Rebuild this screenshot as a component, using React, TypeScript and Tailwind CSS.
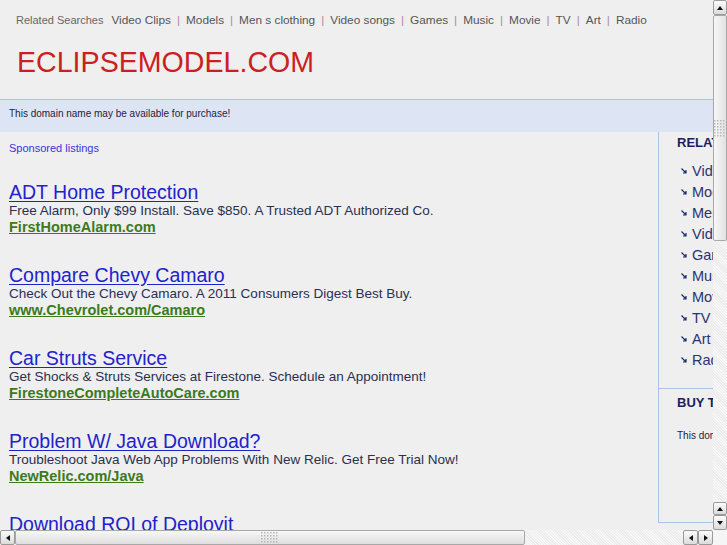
import React from "react";

const navLinks = ["Video Clips", "Models", "Men s clothing", "Video songs", "Games", "Music", "Movie", "TV", "Art", "Radio"];

const listings = [
    {
        title: "ADT Home Protection",
        text: "Free Alarm, Only $99 Install. Save $850. A Trusted ADT Authorized Co.",
        url: "FirstHomeAlarm.com",
    },
    {
        title: "Compare Chevy Camaro",
        text: "Check Out the Chevy Camaro. A 2011 Consumers Digest Best Buy.",
        url: "www.Chevrolet.com/Camaro",
    },
    {
        title: "Car Struts Service",
        text: "Get Shocks & Struts Services at Firestone. Schedule an Appointment!",
        url: "FirestoneCompleteAutoCare.com",
    },
    {
        title: "Problem W/ Java Download?",
        text: "Troubleshoot Java Web App Problems With New Relic. Get Free Trial Now!",
        url: "NewRelic.com/Java",
    },
    {
        title: "Download ROI of Deployit",
        text: "See How Deployit Cuts Deployment Costs. Download the Whitepaper Now!",
        url: "www.XebiaLabs.com",
    },
];

const Arrow = ({ dir }: { dir: "up" | "down" | "left" | "right" }) => {
    const pts = {
        up: "1,6 4,2 7,6",
        down: "1,2 4,6 7,2",
        left: "6,1 2,4 6,7",
        right: "2,1 6,4 2,7",
    }[dir];
    return (
        <svg width="8" height="8" viewBox="0 0 8 8">
            <polygon points={pts} fill="#111" />
        </svg>
    );
};

const Grip = ({ vertical }: { vertical?: boolean }) => {
    const cols = vertical ? 4 : 6;
    const rows = vertical ? 6 : 4;
    const dots = [];
    for (let r = 0; r < rows; r++) {
        for (let c = 0; c < cols; c++) {
            dots.push(<rect key={`${r}-${c}`} x={c * 3} y={r * 3} width="1.5" height="1.5" fill="#b8b8b8" />);
        }
    }
    return (
        <svg width={cols * 3} height={rows * 3}>
            {dots}
        </svg>
    );
};

const ScrollButton = ({ dir, className = "" }: { dir: "up" | "down" | "left" | "right"; className?: string }) => (
    <div
        className={`flex items-center justify-center rounded-[2px] border border-[#9a9a9a] bg-gradient-to-b from-[#fbfbfb] to-[#dcdcdc] ${className}`}
    >
        <Arrow dir={dir} />
    </div>
);

const BulletArrow = () => (
    <svg width="6" height="6" viewBox="0 0 6 6" className="mr-[5px] mt-[-2px] shrink-0">
        <path d="M0.5 0.5 L5 5 M5 2 L5 5 L2 5" stroke="#1e2a6a" strokeWidth="1.2" fill="none" />
    </svg>
);

const App = () => {
    return (
        <div className="flex h-[545px] w-[727px] flex-col overflow-hidden bg-[#efefef] font-['Liberation_Sans',Arial,sans-serif]">
            <div className="flex h-[530px]">
                <div className="w-[713px] shrink-0 overflow-hidden">
                    <div className="h-[99px] px-[16px] pt-[12px]">
                        <div className="flex items-center whitespace-nowrap leading-[16px]">
                            <span className="mr-[8px] text-[11px] text-[#666]">Related Searches</span>
                            {navLinks.map((link, i) => (
                                <span key={link} className="flex items-center text-[11.8px] text-[#555]">
                                    {i > 0 && <span className="px-[6px] text-[#b48aa0]">|</span>}
                                    {link}
                                </span>
                            ))}
                        </div>
                        <div className="mt-[18px] pl-[1px] text-[28.6px] leading-[32px] text-[#cc1f1f]">ECLIPSEMODEL.COM</div>
                    </div>

                    <div className="h-[33px] border-t border-[#aec2e6] bg-[#dde5f4] px-[9px] pt-[8px] text-[10px] leading-[12px] text-[#1f2240]">
                        This domain name may be available for purchase!
                    </div>

                    <div className="flex w-[900px]">
                        <div className="w-[658px] shrink-0 px-[9px] pt-[9px]">
                            <div className="text-[11px] leading-[14px] text-[#3535dd]">Sponsored listings</div>
                            <div className="mt-[27px]">
                                {listings.map((item) => (
                                    <div key={item.title} className="mb-[30px] whitespace-nowrap">
                                        <div className="text-[19.5px] leading-[21px] text-[#2222cc] underline underline-offset-2">
                                            {item.title}
                                        </div>
                                        <div className="text-[13.5px] leading-[16px] text-[#2a2f50]">{item.text}</div>
                                        <div className="text-[14.5px] font-bold leading-[16px] text-[#3d7a1c] underline underline-offset-1">
                                            {item.url}
                                        </div>
                                    </div>
                                ))}
                            </div>
                        </div>

                        <div className="h-[391px] w-[220px] shrink-0 border-b border-l border-[#aec2e6]">
                            <div className="h-[257px] border-b border-[#aec2e6] pl-[18px] pt-[3px]">
                                <div className="text-[13px] font-bold leading-[16px] text-[#1a1f5c]">RELATED SEARCHES</div>
                                <div className="mt-[10px] pl-[4px]">
                                    {navLinks.map((link) => (
                                        <div key={link} className="flex h-[21px] items-center text-[14.5px] text-[#2b3470]">
                                            <BulletArrow />
                                            {link}
                                        </div>
                                    ))}
                                </div>
                            </div>
                            <div className="pl-[18px] pt-[6px]">
                                <div className="text-[13px] font-bold leading-[16px] text-[#1a1f5c]">BUY THIS DOMAIN</div>
                                <div className="mt-[19px] text-[10px] leading-[12px] text-[#1f2240]">
                                    This domain may be for sale.
                                </div>
                            </div>
                        </div>
                    </div>
                </div>

                <div className="flex w-[14px] flex-col bg-[#f5f5f5]">
                    <ScrollButton dir="up" className="h-[15px]" />
                    <div className="flex h-[226px] items-start justify-center rounded-[2px] border border-[#a8a8a8] bg-gradient-to-r from-[#f7f7f7] to-[#e2e2e2] pt-[104px]">
                        <Grip vertical />
                    </div>
                    <div className="flex-1 bg-[repeating-linear-gradient(45deg,#f7f7f7_0px,#f7f7f7_1px,#ececec_1px,#ececec_2px)]" />
                    <ScrollButton dir="up" className="h-[13px]" />
                    <ScrollButton dir="down" className="h-[15px]" />
                </div>
            </div>

            <div className="flex h-[15px] bg-[#f5f5f5]">
                <ScrollButton dir="left" className="w-[15px]" />
                <div className="flex w-[510px] items-center justify-center rounded-[2px] border border-[#a8a8a8] bg-gradient-to-b from-[#f7f7f7] to-[#dedede]">
                    <Grip />
                </div>
                <div className="flex-1 bg-[repeating-linear-gradient(45deg,#f7f7f7_0px,#f7f7f7_1px,#ececec_1px,#ececec_2px)]" />
                <ScrollButton dir="left" className="w-[15px]" />
                <ScrollButton dir="right" className="w-[15px]" />
                <div className="w-[14px]" />
            </div>
        </div>
    );
};

export default App;
